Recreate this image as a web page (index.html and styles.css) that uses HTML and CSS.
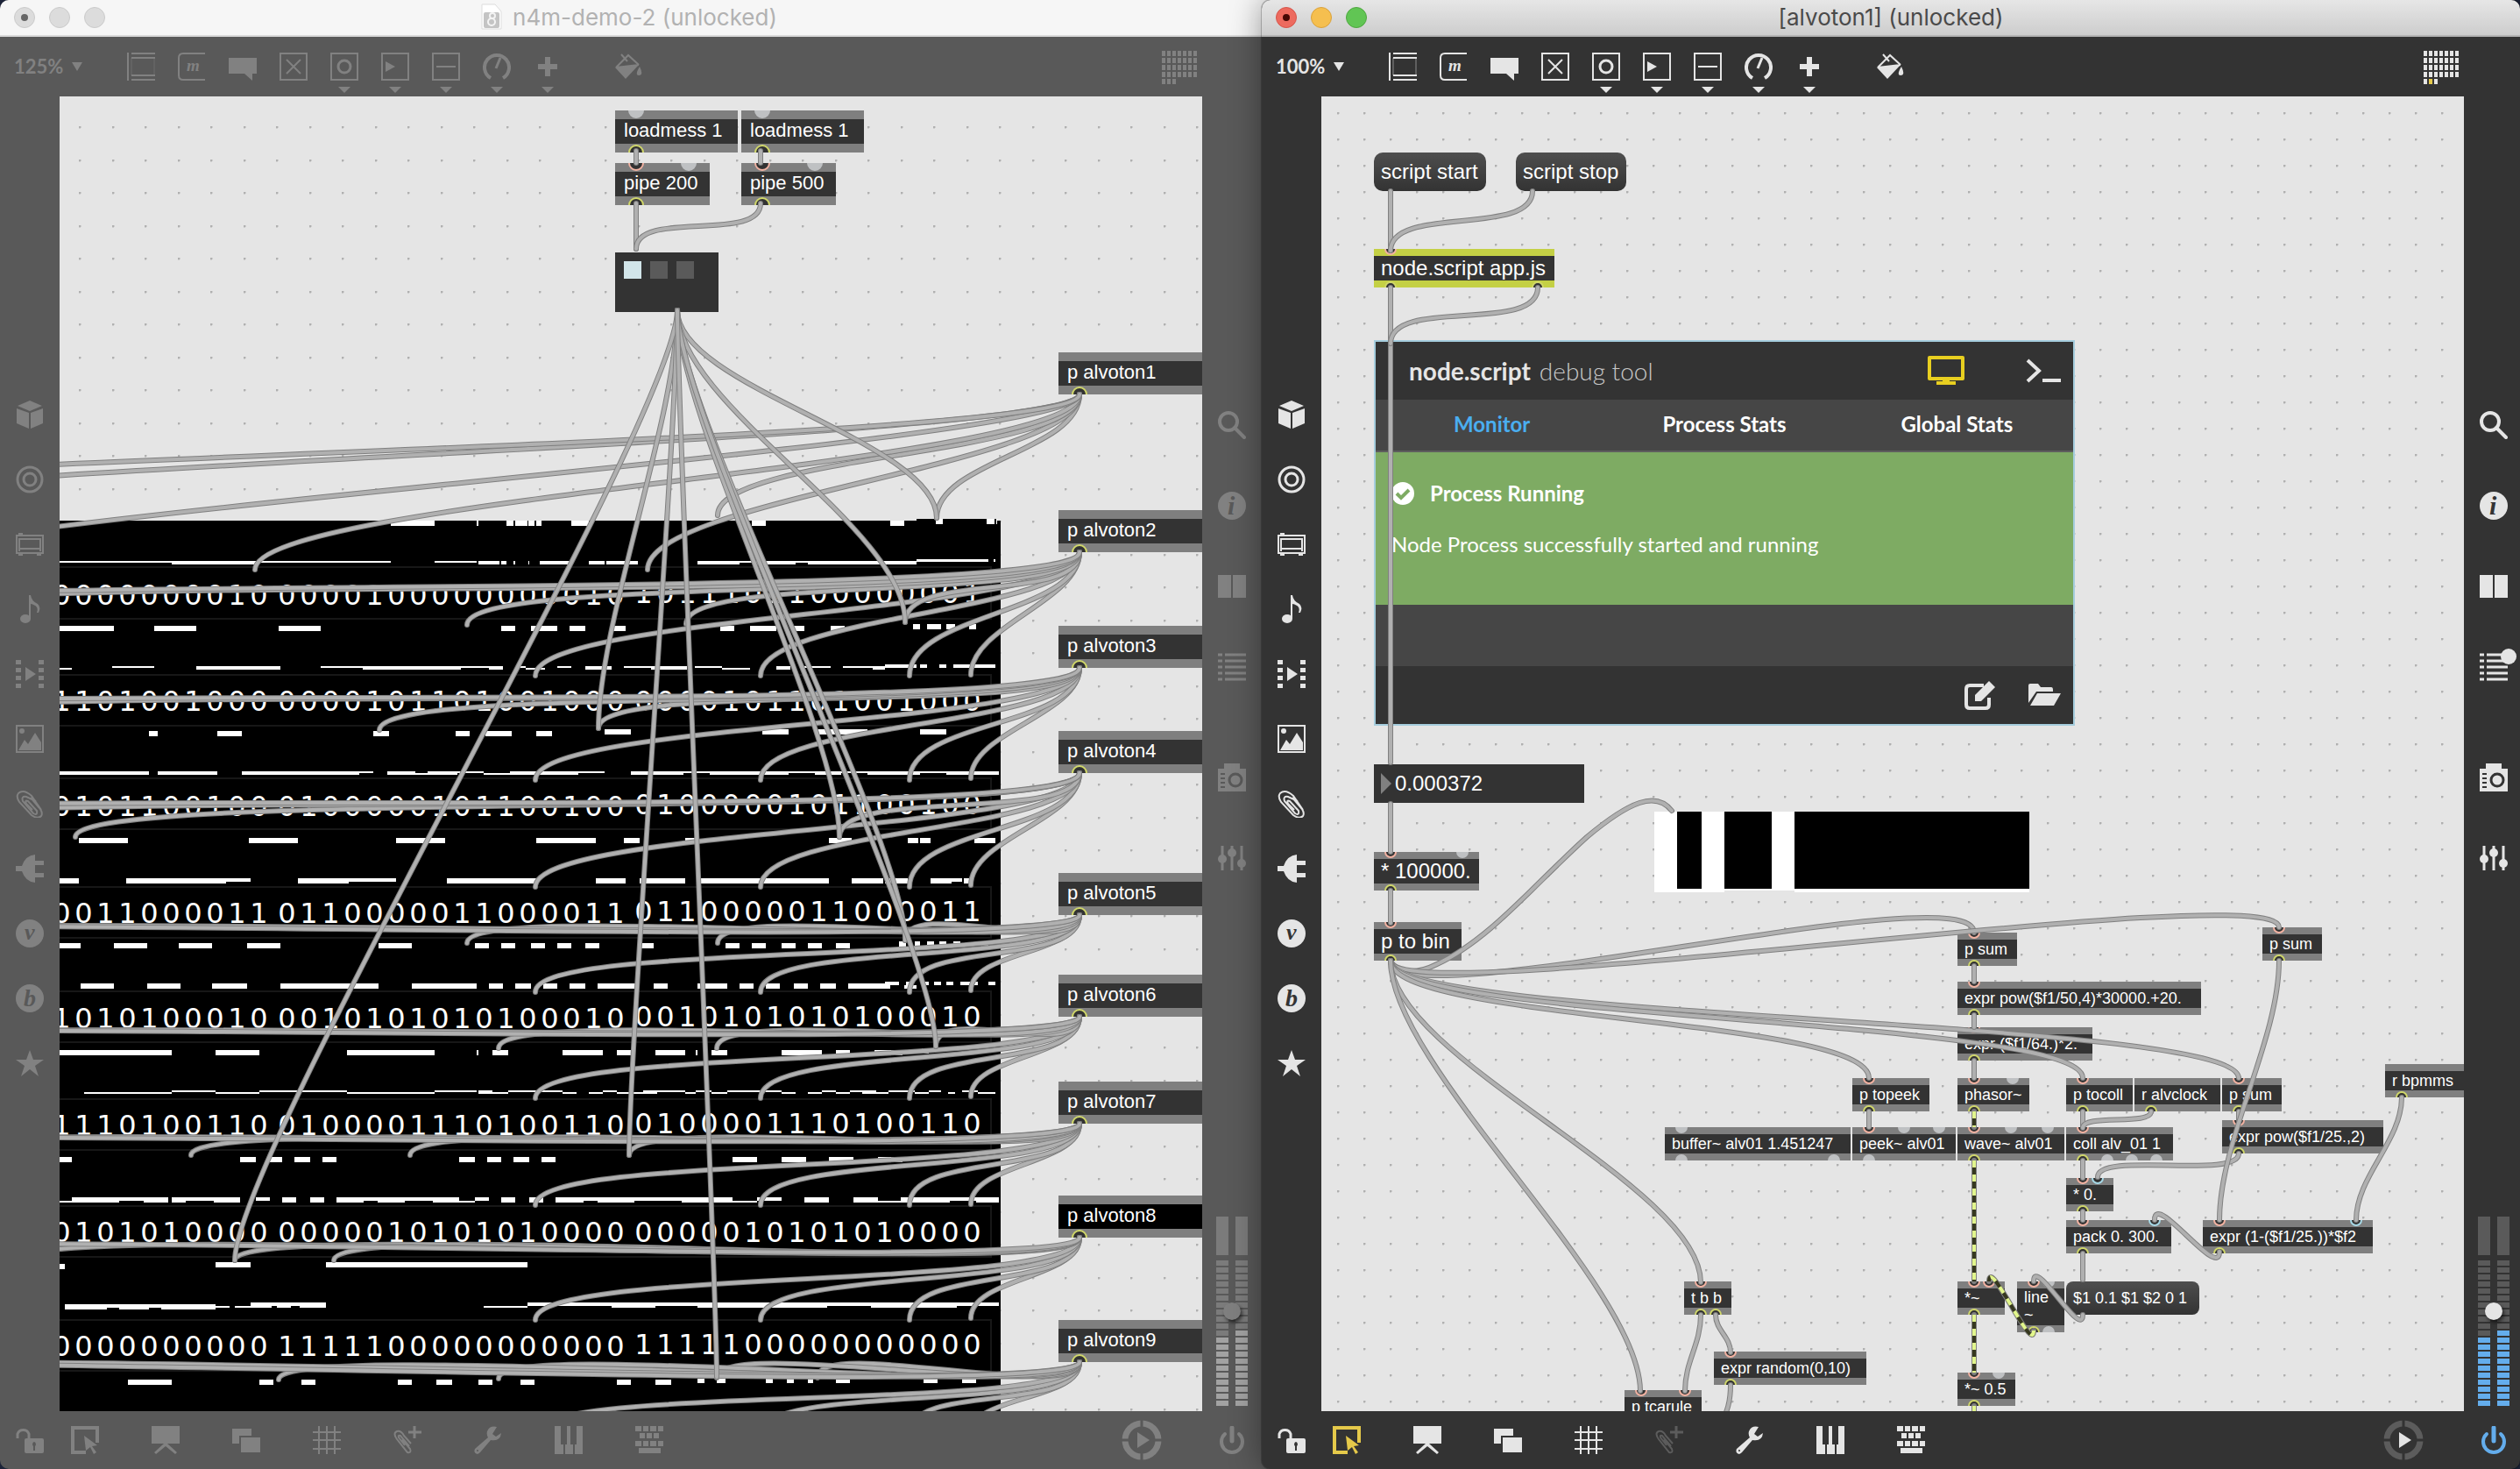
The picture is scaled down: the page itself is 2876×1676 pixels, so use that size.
FILE: index.html
```html
<!DOCTYPE html>
<html lang="en">
<head>
<meta charset="utf-8">
<title>alvoton1 (unlocked)</title>
<link rel="stylesheet" href="styles.css">
</head>
<body>
<svg class="symbols" aria-hidden="true">
  <symbol id="object" viewBox="0 0 32 32"><path d="M1 0V32M5 1H32M5 6H32M5 26H32M5 31H32" fill="none" stroke="currentColor" stroke-width="2"/><path d="M5 6V26M31 6V26" stroke="currentColor" opacity=".5"/></symbol>
  <symbol id="message" viewBox="0 0 32 32"><path d="M31 1H6Q1 1 1 6V26Q1 31 6 31H31" fill="none" stroke="currentColor" stroke-width="2"/><text x="10" y="21" class="glyph" font-size="19">m</text></symbol>
  <symbol id="comment" viewBox="0 0 32 32"><path d="M0 6H32V24H27V32L18 24H0Z" fill="currentColor"/></symbol>
  <symbol id="toggle" viewBox="0 0 32 32"><path d="M1 1H31V31H1ZM8 8L24 24M24 8L8 24" fill="none" stroke="currentColor" stroke-width="2"/></symbol>
  <symbol id="button" viewBox="0 0 32 32"><path d="M1 1H31V31H1Z" fill="none" stroke="currentColor" stroke-width="2"/><circle cx="16" cy="16" r="7" fill="none" stroke="currentColor" stroke-width="3"/></symbol>
  <symbol id="number" viewBox="0 0 32 32"><path d="M1 1H31V31H1Z" fill="none" stroke="currentColor" stroke-width="2"/><path d="M5 10L16 16L5 22Z" fill="currentColor"/></symbol>
  <symbol id="slider" viewBox="0 0 32 32"><path d="M1 1H31V31H1ZM5 16H27" fill="none" stroke="currentColor" stroke-width="2"/></symbol>
  <symbol id="dial" viewBox="0 0 32 32"><path d="M9 29A14 14 0 1 1 23 29" fill="none" stroke="currentColor" stroke-width="4"/><path d="M15 18L20 6" stroke="currentColor" stroke-width="3"/></symbol>
  <symbol id="plus" viewBox="0 0 32 32"><path d="M16 5V27M5 16H27" stroke="currentColor" stroke-width="6"/></symbol>
  <symbol id="bucket" viewBox="0 0 32 32"><path d="M2 17L16 3L28 14M8 2L15 10M2 17L28 14" fill="none" stroke="currentColor" stroke-width="2"/><path d="M1 17L28 14L13 30ZM29 16Q34 26 28 26Q23 26 29 16Z" fill="currentColor"/></symbol>
  <symbol id="cube" viewBox="0 0 32 32"><path d="M16 0L30 6L16 12L2 6ZM1 9L15 14V32L1 26ZM31 9L17 14V32L31 26Z" fill="currentColor"/></symbol>
  <symbol id="target" viewBox="0 0 32 32"><g fill="none" stroke="currentColor" stroke-width="3"><circle cx="16" cy="16" r="14"/><circle cx="16" cy="16" r="7"/></g></symbol>
  <symbol id="panel" viewBox="0 0 32 32"><path d="M1 6H31V26H1ZM4 10H29M4 21H29M4 9V24M28 9V24" fill="none" stroke="currentColor" stroke-width="2"/><path d="M3 3H8V6H3ZM3 26H8V29H3ZM24 26H29V29H24Z" fill="currentColor"/></symbol>
  <symbol id="note" viewBox="0 0 32 32"><ellipse cx="11" cy="27" rx="6" ry="5" fill="currentColor"/><path d="M15 27V0H17Q18 7 25 10Q29 14 26 20H24Q27 12 17 10V27Z" fill="currentColor"/></symbol>
  <symbol id="film" viewBox="0 0 32 32"><path d="M0 0H6V5H0ZM0 9H6V14H0ZM0 18H6V23H0ZM0 27H6V32H0ZM26 0H32V5H26ZM26 9H32V14H26ZM26 18H32V23H26ZM26 27H32V32H26ZM11 8L23 16L11 24Z" fill="currentColor"/></symbol>
  <symbol id="picture" viewBox="0 0 32 32"><path d="M1 1H31V31H1Z" fill="none" stroke="currentColor" stroke-width="2"/><circle cx="7" cy="7" r="3" fill="currentColor"/><path d="M3 29L10 17L14 22L22 9L29 20V29Z" fill="currentColor"/></symbol>
  <symbol id="clip" viewBox="0 0 32 32"><path d="M23 12L12 7Q6 6 8 12L20 26Q25 29 24 23L14 12Q10 10 12 15L19 22M12 7M29 22L18 6Q9 -2 3 3Q0 7 4 13L18 28Q25 33 29 29Q31 26 28 21L17 8" transform="translate(0 1)" fill="none" stroke="currentColor" stroke-width="2"/></symbol>
  <symbol id="plug" viewBox="0 0 32 32"><path d="M0 13H7Q11 1 22 0V7H32V12H22V21H32V26H22V32Q11 31 7 19H0Z" fill="currentColor"/></symbol>
  <symbol id="vizzie" viewBox="0 0 32 32"><circle cx="16" cy="16" r="16" fill="currentColor"/><text x="10" y="23" class="cutout" font-size="26">v</text></symbol>
  <symbol id="beap" viewBox="0 0 32 32"><circle cx="16" cy="16" r="16" fill="currentColor"/><text x="9" y="25" class="cutout" font-size="28">b</text></symbol>
  <symbol id="star" viewBox="0 0 32 32"><path d="M16 1L20 12H32L22 19L26 31L16 23L6 31L10 19L0 12H12Z" fill="currentColor"/></symbol>
  <symbol id="search" viewBox="0 0 32 32"><circle cx="12" cy="12" r="10" fill="none" stroke="currentColor" stroke-width="4"/><path d="M19 19L30 30" stroke="currentColor" stroke-width="4" stroke-linecap="round"/></symbol>
  <symbol id="info" viewBox="0 0 32 32"><circle cx="16" cy="16" r="16" fill="currentColor"/><text x="11" y="26" class="cutout" font-size="30">i</text></symbol>
  <symbol id="book" viewBox="0 0 32 32"><path d="M0 3H15V29H0ZM17 3H32V29H17Z" fill="currentColor"/></symbol>
  <symbol id="list" viewBox="0 0 32 32"><path d="M0 2H5M8 2H32M0 9H5M8 9H32M0 16H5M8 16H32M0 23H5M8 23H32M0 30H5M8 30H32" stroke="currentColor" stroke-width="3"/></symbol>
  <symbol id="camera" viewBox="0 0 32 32"><path d="M7 0H25V6H32V32H0V6H7Z" fill="currentColor"/><circle cx="20" cy="19" r="7" fill="none" stroke="var(--bar)" stroke-width="3"/><path d="M3 12H8M3 17H8M3 22H8M3 27H8" stroke="var(--bar)" stroke-width="2"/></symbol>
  <symbol id="sliders" viewBox="0 0 32 32"><path d="M5 2V30M16 2V30M27 2V30" stroke="currentColor" stroke-width="3"/><g fill="currentColor"><circle cx="5" cy="17" r="5"/><circle cx="16" cy="10" r="5"/><circle cx="27" cy="22" r="5"/></g></symbol>
  <symbol id="unlock" viewBox="0 0 32 32"><path d="M2 14V9A7 7 0 0 1 15 9V15" fill="none" stroke="currentColor" stroke-width="3"/><rect x="10" y="14" width="22" height="17" rx="2" fill="currentColor"/><path d="M21 18A3 3 0 0 1 22 23V28H20V23A3 3 0 0 1 21 18Z" fill="var(--bar)"/></symbol>
  <symbol id="select" viewBox="0 0 32 32"><path d="M0 0H32V19H28V4H4V28H17V32H0Z" fill="currentColor"/><path d="M15 11L30 22L24 23L29 30L26 32L22 24L17 28Z" fill="currentColor"/></symbol>
  <symbol id="present" viewBox="0 0 32 32"><path d="M0 0H32V20H0ZM14 20H18L29 30L27 32L16 23L5 32L3 30Z" fill="currentColor"/></symbol>
  <symbol id="layers" viewBox="0 0 32 32"><path d="M0 3H22V11H8V20H0ZM10 13H32V30H10Z" fill="currentColor"/></symbol>
  <symbol id="grid" viewBox="0 0 32 32"><path d="M7 0V32M16 0V32M25 0V32M0 7H32M0 16H32M0 26H32" stroke="currentColor" stroke-width="2"/></symbol>
  <symbol id="clipplus" viewBox="0 0 32 32"><path d="M13 22L6 13Q5 10 8 11L18 23M10 15L19 26Q21 31 16 30L4 15Q-1 8 4 6Q9 5 12 11L20 20" fill="none" stroke="currentColor" stroke-width="2"/><path d="M24 0V14M17 7H32" stroke="currentColor" stroke-width="3"/></symbol>
  <symbol id="wrench" viewBox="0 0 32 32"><path d="M26 1Q18 -1 15 6Q14 10 16 13L1 26Q-1 31 4 32Q6 31 7 30L19 16Q30 18 31 8L25 12L21 9Z" fill="currentColor"/><circle cx="4" cy="28" r="1" fill="var(--bar)"/></symbol>
  <symbol id="piano" viewBox="0 0 32 32"><path d="M0 0H7V21H10V32H0ZM12 21H14V0H18V21H21V32H12ZM25 0H32V32H23V21H25Z" fill="currentColor"/></symbol>
  <symbol id="keys" viewBox="0 0 32 32"><path d="M0 3H7M9 3H15M17 3H24M26 3H32M5 11H11M13 11H19M21 11H27M0 20H7M9 20H15M17 20H24M26 20H32M4 28H29" stroke="currentColor" stroke-width="6"/></symbol>
  <symbol id="run" viewBox="0 0 46 46"><circle cx="23" cy="23" r="19" fill="none" stroke="var(--ring)" stroke-width="7"/><path d="M23 0V10M23 36V46M0 23H10M36 23H46" stroke="var(--bar)" stroke-width="3"/><path d="M18 14L32 23L18 32Z" fill="currentColor"/></symbol>
  <symbol id="power" viewBox="0 0 32 32"><path d="M8 9A12 12 0 1 0 24 9" fill="none" stroke="currentColor" stroke-width="4" stroke-linecap="round"/><path d="M16 2V17" stroke="currentColor" stroke-width="5" stroke-linecap="round"/></symbol>
</svg>

<main class="desktop">
  <section class="window window--idle" data-patch="demo">
    <header class="titlebar">
      <span class="lights"><i class="light light--dot"></i><i class="light"></i><i class="light"></i></span>
      <h1 class="title"><svg class="doc" viewBox="0 0 24 30" aria-hidden="true"><path d="M1 1H16L23 9V29H1Z" fill="#fff" stroke="#ddd"/><rect x="3" y="10" width="18" height="18" rx="2" fill="#c4c4c4"/><circle cx="12" cy="21" r="4" fill="none" stroke="#f4f4f4" stroke-width="2"/><circle cx="13" cy="14" r="3" fill="none" stroke="#f4f4f4" stroke-width="2"/></svg>n4m-demo-2 (unlocked)</h1>
    </header>
    <nav class="toolbar" aria-label="Objects" data-zoom="125%"></nav>
    <div class="workspace">
      <nav class="side side--left" aria-label="Browsers"></nav>
      <div class="canvas canvas--zoomed"></div>
      <aside class="side side--right"></aside>
    </div>
    <footer class="bottombar"></footer>
  </section>

  <section class="window window--active" data-patch="alvoton">
    <header class="titlebar">
      <span class="lights"><i class="light light--dot light--red"></i><i class="light light--amber"></i><i class="light light--green"></i></span>
      <h1 class="title">[alvoton1] (unlocked)</h1>
    </header>
    <nav class="toolbar" aria-label="Objects" data-zoom="100%"></nav>
    <div class="workspace">
      <nav class="side side--left" aria-label="Browsers"></nav>
      <div class="canvas">
        <article class="debug">
          <header class="debug__head">
            <strong>node.script</strong><span class="debug__sub">debug tool</span>
            <svg class="debug__screen" viewBox="0 0 42 34" aria-hidden="true"><path d="M2 2H40V26H2Z" fill="none" stroke="#e8cf20" stroke-width="4" stroke-linejoin="round"/><path d="M10 31H32" stroke="#e8cf20" stroke-width="4"/><path d="M21 26V31" stroke="#e8cf20" stroke-width="8"/></svg>
            <svg class="debug__shell" viewBox="0 0 40 30" aria-hidden="true"><path d="M2 3L15 15L2 27M19 26H40" fill="none" stroke="#e5e5e5" stroke-width="4"/></svg>
          </header>
          <nav class="debug__tabs"><button class="tab tab--on">Monitor</button><button class="tab">Process Stats</button><button class="tab">Global Stats</button></nav>
          <div class="debug__status">
            <p class="debug__state"><svg class="debug__check" viewBox="0 0 26 26" aria-hidden="true"><circle cx="13" cy="13" r="13" fill="#fff"/><path d="M6 13L11 18L20 9" fill="none" stroke="#7eab63" stroke-width="4"/></svg>Process Running</p>
            <p class="debug__note">Node Process successfully started and running</p>
          </div>
          <footer class="debug__foot">
            <svg class="debug__action" viewBox="0 0 38 34" aria-hidden="true"><path d="M22 6H6Q2 6 2 10V28Q2 32 6 32H24Q28 32 28 28V20" fill="none" stroke="#e5e5e5" stroke-width="4"/><path d="M12 24V17L28 1L35 8L19 24Z" fill="#e5e5e5"/></svg>
            <svg class="debug__action" viewBox="0 0 38 34" aria-hidden="true"><path d="M1 26V6Q1 4 3 4H12L15 8H27Q29 8 29 11V13H10ZM3 29L11 15H38L30 29Z" fill="#e5e5e5"/></svg>
          </footer>
        </article>
      </div>
      <aside class="side side--right"></aside>
    </div>
    <footer class="bottombar"></footer>
  </section>
</main>
<script src="patch.js"></script>
</body>
</html>
```

FILE: styles.css
```css
* { box-sizing: border-box; }
body { margin: 0; background: #1c2338; font-family: "Liberation Sans", Arial, sans-serif; }
button, input, select { font: inherit; color: inherit; border: 0; margin: 0; padding: 0; background: none; border-radius: 0; }
h1, p { margin: 0; }
svg { display: block; }
.symbols { display: none; }
.glyph, .cutout { font-family: "Liberation Serif", serif; font-style: italic; font-weight: bold; fill: currentColor; }
.cutout { fill: var(--bar); }

.desktop { display: grid; grid-template-columns: 1fr 1fr; height: 100vh; overflow: hidden; }
.window { position: relative; display: flex; flex-direction: column; min-width: 0; min-height: 0; border-radius: 10px; overflow: hidden; background: var(--bar); color: var(--ink); }
/* The idle window slides under the edge of the active one. */
.window--idle { --bar: #595959; --ink: #818181; --ring: #818181; --well: #7b7b7b; --lit: #a2a2a2; --knob: #7f7f7f; --accent: #818181; --power: #818181; --dim: #818181; margin-right: -12px; padding-right: 14px; border-radius: 10px 0 0 10px; }
.window--idle .titlebar { margin-right: -14px; }
.window--active { --bar: #333; --ink: #e5e5e5; --ring: #5c5c5c; --well: #5a5a5a; --lit: #64adec; --knob: #e5e5e5; --accent: #e5c94a; --power: #64adec; --dim: #5c5c5c; margin-left: 2px; box-shadow: 0 0 0 1px rgba(0, 0, 0, .2), 0 0 36px rgba(0, 0, 0, .4); }

.titlebar { display: grid; grid-template-columns: 130px 1fr 130px; align-items: center; height: 42px; flex: none; border-bottom: 2px solid #dadada; background: #f6f6f6; color: #b2b2b2; }
.window--idle .titlebar { padding-right: 14px; }
.window--active .titlebar { background: linear-gradient(#e6e6e6, #cdcdcd); border-color: #b4b4b4; color: #4a4a4a; }
.lights { display: flex; gap: 16px; padding-left: 16px; }
.light { display: grid; place-items: center; width: 24px; height: 24px; border: 1px solid #cacaca; border-radius: 50%; background: #dcdcdc; }
.light--red { background: #ed6a5e; border-color: #d5544a; color: #460804; }
.light--amber { background: #f5bf4f; border-color: #d9a13c; }
.light--green { background: #61c554; border-color: #4ea73f; }
.light--dot::after { content: ""; width: 8px; height: 8px; border-radius: 50%; background: #666; }
.light--red::after { background: #460804; }
.title { display: flex; justify-content: center; gap: 12px; font: 400 26px/32px Inter, sans-serif; white-space: nowrap; }
.doc { width: 24px; height: 30px; }

.toolbar { display: flex; align-items: stretch; height: 68px; flex: none; }
.zoom { position: relative; display: flex; align-items: center; width: 132px; padding-left: 16px; }
.zoom select { appearance: none; width: 80px; font: 700 22px/28px Lato, sans-serif; }
.zoom svg { position: absolute; left: 82px; top: 29px; width: 12px; height: 10px; pointer-events: none; }
.tool { position: relative; display: grid; place-items: center; width: 58px; }
.tool--fill { margin-left: 34px; }
.icon { width: 32px; height: 32px; }
.caret { position: absolute; left: 22px; bottom: 4px; width: 14px; height: 7px; }
.cells { display: grid; grid-template-columns: repeat(7, 4px); grid-auto-rows: 6px; gap: 2px; align-self: center; margin: 2px 70px 0 auto; }
.cell { background: currentColor; }
.window--active .cell--on { background: #e5c94a; }

.workspace { display: flex; flex: 1; min-height: 0; }
.side { display: flex; flex-direction: column; flex: none; }
.side--left { width: 68px; padding-top: 326px; }
.side--left .tool { width: 68px; height: 74px; }
.side--right { width: 64px; padding: 329px 0 6px 4px; }
.side--right .tool { width: 60px; height: 92px; }
.side--right .tool--gap { margin-top: 34px; }
.badge { position: absolute; right: 4px; top: 25px; width: 18px; height: 18px; border-radius: 50%; background: #e5e5e5; }
.window--idle .badge { display: none; }
.meter { position: relative; display: flex; gap: 8px; margin: auto 0 0 12px; width: 36px; height: 216px; }
.meter__bar { position: relative; width: 14px; background: linear-gradient(var(--well), var(--well)) top / 14px 44px no-repeat, repeating-linear-gradient(to top, var(--well) 0 6px, transparent 6px 8px) bottom / 14px 168px no-repeat; }
.meter__lit { position: absolute; inset: auto 0 0; background: repeating-linear-gradient(to top, var(--lit) 0 6px, var(--bar) 6px 8px); }
.meter input { position: absolute; inset: 0; width: 36px; height: 216px; appearance: none; writing-mode: vertical-lr; direction: rtl; }
.meter input::-webkit-slider-thumb { appearance: none; width: 20px; height: 20px; border-radius: 50%; background: var(--knob); box-shadow: 2px 3px 4px rgba(0, 0, 0, .6); }

.bottombar { display: flex; align-items: stretch; height: 66px; flex: none; }
.bottombar .tool { width: 92px; }
.bottombar .tool--unlock { width: 34px; margin-left: 17px; }
.bottombar .tool--select { color: var(--accent); }
.bottombar .tool--clipplus { color: var(--dim); }
.bottombar .tool--run { margin-left: auto; }
.bottombar .tool--run .icon { width: 46px; height: 46px; }
.bottombar .tool--power { width: 60px; margin-left: 27px; color: var(--power); }

/* Patcher canvas: objects sit freely on a dotted grid. */
.canvas { position: relative; flex: 1; min-width: 0; overflow: hidden; background: #e5e5e5 radial-gradient(circle at 1px 1px, #b0b0b0 1px, transparent 2px) 18px 18px / 30px 30px; }
.canvas--zoomed {
  --dot: radial-gradient(circle at 1px 1px, #b0b0b0 1px, transparent 2px);
  background: var(--dot) 22px 34px / 75px 75px, var(--dot) 60px 34px / 75px 75px, var(--dot) 22px 72px / 75px 75px, var(--dot) 60px 72px / 75px 75px, #e5e5e5;
}
.layer { position: absolute; left: 0; top: 0; pointer-events: none; }
.box { position: absolute; padding: 0 8px; border: solid #7f7f7f; border-width: 8px 0; background: #333; color: #fff; font-size: 18px; line-height: 22px; white-space: nowrap; text-align: left; overflow: hidden; }
.box--large { font-size: 24px; line-height: 28px; }
.box--zoomed { font-size: 22px; line-height: 26px; border-width: 10px 0; padding: 0 10px; }
.box--wrap { white-space: normal; line-height: 20px; }
.box--node { border-color: #c4d045; }
.box--held { background: #000; }
.box--message { border: 0; border-radius: 8px; background: linear-gradient(#4e4e4e, #333); }
.box--message.box--large { border-radius: 10px; }
.box--number { border: 0; padding: 0 0 0 24px; }
.preset { position: absolute; display: flex; gap: 10px; padding: 10px; background: #333; }
.preset i { width: 20px; height: 20px; background: #5a5a5a; }
.preset i:first-child { background: #d2e5e9; }
.digits { position: absolute; display: grid; grid-auto-flow: column; grid-auto-columns: 25px; color: #fff; font: 32px/40px "DejaVu Sans", sans-serif; text-align: center; }
.cord { fill: none; stroke-linecap: round; }
.cord--edge { stroke: #808080; stroke-width: 6px; }
.cord--core { stroke: #b0b0b0; stroke-width: 4px; }
.cord--dark { stroke: #36381f; stroke-width: 4px; stroke-linecap: butt; }
.cord--signal { stroke: #e2f68d; stroke-width: 4px; stroke-linecap: butt; stroke-dasharray: 8 8; }

.debug { position: absolute; left: 60px; top: 278px; width: 800px; height: 440px; display: flex; flex-direction: column; border: 2px solid #a5cddd; background: #464646; color: #fff; font: 24px/32px Lato, sans-serif; }
.debug__head { display: flex; align-items: center; height: 66px; padding: 0 14px 0 38px; background: #333; font-size: 28px; color: #e5e5e5; }
.debug__sub { margin-left: 10px; font-weight: 300; color: #c8c8c8; }
.debug__screen { width: 42px; height: 34px; margin-left: auto; }
.debug__shell { width: 40px; height: 30px; margin-left: 70px; }
.debug__tabs { display: grid; grid-template-columns: repeat(3, 1fr); height: 60px; padding-bottom: 2px; border-bottom: 2px solid #5e5e5e; }
.tab { font-weight: 700; }
.tab--on { color: #4aaef0; }
.debug__status { height: 174px; padding: 31px 18px; background: #7eab63; }
.debug__state { display: flex; align-items: center; gap: 18px; font-weight: 700; }
.debug__check { width: 26px; height: 26px; }
.debug__note { margin-top: 26px; }
.debug__foot { display: flex; justify-content: flex-end; align-items: center; gap: 34px; height: 66px; margin-top: auto; padding-right: 14px; background: #333; }
.debug__action { width: 38px; height: 34px; }
```

FILE: patch.js
```js
const icon = (id) => `<svg class="icon" aria-hidden="true"><use href="#${id}"/></svg>`;
const caret = '<svg class="caret" viewBox="0 0 14 7"><path d="M0 0H14L7 7Z" fill="currentColor"/></svg>';
const tool = (id, cls = '', extra = '') => `<button class="tool ${cls}" aria-label="${id}">${icon(id)}${extra}</button>`;

/* Window chrome */
document.querySelectorAll('.window').forEach((win) => {
  const bar = win.querySelector('.toolbar');
  const zoom = bar.dataset.zoom;
  const dropdowns = ['button', 'number', 'slider', 'dial', 'plus'];
  bar.innerHTML =
    `<label class="zoom"><select aria-label="Zoom"><option>${zoom}</option></select><svg viewBox="0 0 12 10"><path d="M0 0H12L6 10Z" fill="currentColor"/></svg></label>` +
    ['object', 'message', 'comment', 'toggle', ...dropdowns].map((id) => tool(id, '', dropdowns.includes(id) ? caret : '')).join('') +
    tool('bucket', 'tool--fill') +
    `<span class="cells">${Array.from({ length: 31 }, (_, i) => `<i class="cell${i === 29 ? ' cell--on' : ''}"></i>`).join('')}</span>`;
  win.querySelector('.side--left').innerHTML =
    ['cube', 'target', 'panel', 'note', 'film', 'picture', 'clip', 'plug', 'vizzie', 'beap', 'star'].map((id) => tool(id)).join('');
  win.querySelector('.side--right').innerHTML =
    tool('search') + tool('info') + tool('book') + tool('list', '', '<span class="badge"></span>') + tool('camera', 'tool--gap') + tool('sliders') +
    '<div class="meter"><div class="meter__bar"><div class="meter__lit" style="height:80px"></div></div><div class="meter__bar"><div class="meter__lit" style="height:88px"></div></div><input type="range" aria-label="Gain" value="50"></div>';
  win.querySelector('.bottombar').innerHTML =
    ['unlock', 'select', 'present', 'layers', 'grid', 'clipplus', 'wrench', 'piano', 'keys', 'run', 'power'].map((id) => tool(id, 'tool--' + id)).join('');
});

/* Patches. box: [x, y, w, h, text, classes, inlets, outlets]; a port is "<x offset><kind>"
   with kind h = hot, b = cold with a cord, c = free. cord: [x1, y1, x2, y2, bend]. */
const demo = {
  origin: [68, 110], port: 8, style: 'box--zoomed',
  boxes: [
    [702, 126, 140, 48, 'loadmess 1', '', '24c', '24o'],
    [846, 126, 140, 48, 'loadmess 1', '', '24c', '24o'],
    [702, 186, 108, 48, 'pipe 200', '', '24h 84c', '24o'],
    [846, 186, 108, 48, 'pipe 500', '', '24h 84c', '24o'],
    ...[402, 582, 714, 834, 996, 1112, 1234, 1364, 1506].map((y, i) => [1208, y, 200, 48, 'p alvoton' + (i + 1), i === 7 ? 'box--held' : '', '', '24o']),
  ],
  cords: [
    [726, 172, 726, 186], [868, 172, 868, 186], [726, 232, 726, 284], [868, 232, 726, 284],
  ],
  signals: [],
  paths: [],
};
const fans = {
  450: [[1069, 591], [739, 650], [819, 588], [291, 650], [-160, 650, 60], [-350, 592, 56], [-590, 588, 63]],
  630: [[1108, 770], [1038, 771], [868, 771], [611, 771], [1033, 710], [783, 712], [533, 713], [-220, 713, 74], [-470, 711, 66]],
  762: [[1108, 888], [1038, 890], [868, 890], [611, 890], [683, 831], [433, 833], [-220, 832, 66], [-470, 830, 66]],
  882: [[1108, 1010], [1038, 1012], [868, 1012], [611, 1012], [958, 955], [86, 955], [-220, 953, 66], [-470, 950, 68]],
  1044: [[1108, 1130], [1038, 1132], [868, 1132], [611, 1132], [1033, 1073], [819, 1076], [533, 1076], [-220, 1074, 46], [-470, 1076, 50]],
  1160: [[1108, 1251], [1038, 1253], [868, 1253], [611, 1253], [1068, 1194], [818, 1196], [569, 1196], [-220, 1194, 46], [-470, 1196, 50]],
  1282: [[1108, 1374], [1038, 1375], [868, 1375], [611, 1375], [718, 1318], [468, 1318], [218, 1318], [-220, 1316, 46], [-470, 1318, 50]],
  1412: [[1108, 1504], [1038, 1506], [868, 1506], [611, 1506], [381, 1438], [268, 1438], [20, 1438], [-220, 1436, 46]],
  1554: [[1108, 1636], [1038, 1636], [868, 1636], [611, 1636], [933, 1572], [818, 1572], [569, 1573], [318, 1574], [-220, 1570, 46], [-470, 1572, 50]],
};
for (const [y, ends] of Object.entries(fans)) ends.forEach(([x2, y2, bend]) => demo.cords.push([1232, +y, x2, y2, bend]));
[[1069, 591], [1033, 710], [683, 831], [958, 955], [1033, 1073], [1068, 1194], [718, 1318], [268, 1438], [818, 1571]]
  .forEach(([x, y]) => demo.cords.push([773, 354, x, y]));

/* Cellular-automaton read-outs: y of each digit row, then its three words. */
const rows = [
  [676, -2, '0000000010', '0000100000000010', '1011101100000001'],
  [797, 0, '1101001000', '0000101101001000', '0000101101001000'],
  [917, -2, '0101100100', '0100000101100100', '0100000101100100'],
  [1039, -2, '0011000011', '0110000011000011', '0110000011000011'],
  [1159, -2, '1010100010', '0010101010100010', '0010101010100010'],
  [1281, -2, '1110100110', '0100001110100110', '0100001110100110'],
  [1403, 0, '0101010000', '0000010101010000', '0000010101010000'],
  [1533, -2, '0000000000', '1111100000000000', '1111100000000000'],
];
const frames = [[647, 706], [770, 828], [888, 946], [1012, 1070], [1131, 1189], [1254, 1312], [1376, 1434], [1506, 1564]];
/* Slider traces: [y, height, x1, x2, x1, x2, ...] */
const traces = [
  [594, 6, 446, 496, 544, 546, 578, 586, 588, 602, 603, 610, 612, 618, 652, 672, 858, 874, 1016, 1032],
  [592, 6, 1068, 1076, 1126, 1135, 1137, 1138],
  [640, 2, 68, 446, 496, 544, 844, 860, 908, 922],
  [640, 4, 196, 294, 546, 570, 572, 578, 586, 588, 603, 604, 616, 650, 672, 690, 692, 728, 796, 844, 860, 908, 922, 1046],
  [638, 3, 1046, 1128, 1134, 1136],
  [714, 6, 68, 130, 176, 224, 318, 366, 572, 588, 606, 636, 650, 668, 698, 714, 822, 838, 856, 886, 903, 918, 948, 964],
  [712, 6, 1042, 1050, 1058, 1074, 1080, 1090, 1106, 1114],
  [760, 2, 128, 176, 366, 414, 526, 558, 588, 600, 636, 652, 712, 743, 793, 824, 916, 948, 962, 996],
  [762, 2, 68, 82, 600, 622, 824, 856],
  [760, 4, 224, 320, 414, 526, 558, 574, 668, 698, 743, 784, 886, 902, 996, 1010],
  [758, 4, 1010, 1046, 1050, 1058, 1072, 1080, 1088, 1136],
  [834, 6, 170, 180, 248, 276, 426, 444, 520, 536, 554, 584, 612, 630],
  [832, 6, 690, 720, 870, 900, 930, 990, 1050, 1080],
  [880, 2, 410, 426, 522, 552, 582, 690, 780, 810, 900, 930, 960, 990, 1050, 1080],
  [880, 4, 68, 170, 180, 248, 276, 410, 442, 474, 488, 522, 582, 612, 630, 660, 720, 780, 810, 900, 930, 960, 990, 1050, 1080, 1140],
  [882, 2, 474, 488, 552, 582, 612, 630],
  [956, 6, 90, 146, 284, 340, 452, 508, 612, 680, 712, 730, 782, 794, 946, 972, 1036, 1048, 1050, 1062, 1112, 1136],
  [1002, 6, 68, 90, 144, 258, 340, 398, 510, 612, 680, 714, 730, 782, 800, 946, 972, 1008, 1010, 1036, 1062, 1086, 1100, 1106],
  [1002, 4, 258, 286, 398, 452, 1086, 1098],
  [1076, 6, 68, 92, 130, 168, 204, 242, 282, 320, 432, 470, 542, 558, 572, 588, 606, 622, 636, 652, 668, 684, 731, 746, 828, 844, 858, 874, 892, 908, 922, 938, 954, 970],
  [1074, 6, 1026, 1034, 1044, 1050, 1058, 1066, 1072, 1080, 1088, 1096, 1120, 1128],
  [1122, 6, 92, 130, 168, 206, 242, 282, 320, 432, 470, 544, 558, 574, 588, 606, 620, 636, 650, 668, 682, 728, 746, 762, 796, 830, 844, 860, 874, 890, 906, 922, 936, 954, 968, 1016],
  [1120, 4, 1010, 1026, 1034, 1040, 1054, 1060, 1066, 1074, 1080, 1088, 1096, 1116, 1128, 1136],
  [1124, 4, 1032, 1046],
  [1198, 6, 68, 196, 246, 296, 396, 496, 544, 546, 562, 580, 642, 688, 704, 720, 748, 782, 794, 796, 812, 830, 892, 938, 954, 970, 998, 1030],
  [1196, 6, 1052, 1060],
  [1244, 2, 196, 246, 296, 396, 496, 544, 546, 562, 580, 642, 688, 704, 734, 782, 794, 812, 830, 892, 938, 954, 970, 1000, 1014, 1044, 1060, 1074, 1098, 1116],
  [1246, 2, 96, 196, 246, 296, 396, 496, 546, 580, 642, 658, 672, 688, 704, 750, 782, 794, 812, 830, 892, 908, 922, 938, 954, 970, 984, 1014, 1044, 1060, 1082, 1090, 1116, 1136],
  [1320, 6, 68, 82, 274, 292, 306, 322, 336, 354, 368, 384, 524, 542, 556, 572, 586, 604, 618, 634, 836, 864, 892, 920, 946, 974, 1002, 1030],
  [1366, 4, 136, 164, 212, 244, 292, 308, 415, 431, 462, 494, 542, 558, 666, 682, 724, 778, 864, 892, 1084, 1114],
  [1366, 6, 82, 136, 164, 192, 196, 212, 244, 274, 322, 338, 354, 370, 384, 415, 431, 462, 494, 524, 572, 588, 604, 620, 634, 666, 682, 724, 778, 836, 918, 946, 974, 1002, 1028, 1084, 1114, 1140],
  [1370, 2, 68, 82, 524, 542, 836, 864, 1002, 1028],
  [1440, 6, 246, 286, 372, 602], [1442, 6, 68, 74],
  [1488, 6, 74, 122, 136, 170, 184, 246], [1488, 4, 122, 136, 170, 184],
  [1490, 2, 246, 262, 268, 286, 552, 602],
  [1486, 6, 286, 310, 316, 332, 342, 372, 698, 748, 796, 944, 994, 1092],
  [1486, 4, 310, 316, 332, 342, 602, 698, 748, 796, 944, 994, 1092, 1140],
  [1574, 6, 146, 196, 296, 312, 344, 360, 454, 470, 498, 516, 546, 562, 594, 610, 704, 720, 748, 766],
  [1573, 5, 796, 804, 818, 828, 874, 882, 898, 906, 922, 928, 954, 970, 1054, 1070, 1098, 1114],
];

const alvoton = {
  origin: [1508, 110], port: 6, style: '',
  boxes: [
    [1568, 174, 128, 44, 'script start', 'box--large box--message', '', ''],
    [1730, 174, 126, 44, 'script stop', 'box--large box--message', '', ''],
    [1568, 284, 206, 44, 'node.script app.js', 'box--large box--node', '19h', '19o 187o'],
    [1568, 872, 240, 44, '0.000372', 'box--large box--number', '', ''],
    [1568, 972, 120, 44, '* 100000.', 'box--large', '19h 101c', '19o'],
    [1568, 1052, 100, 44, 'p to bin', 'box--large', '19h', '19o'],
    [2234, 1064, 68, 38, 'p sum', '', '19h', '19o'],
    [2582, 1058, 68, 38, 'p sum', '', '19h', '19o'],
    [2234, 1120, 278, 38, 'expr pow($f1/50,4)*30000.+20.', '', '19h', '19o'],
    [2234, 1172, 154, 38, 'expr ($f1/64.)*2.', '', '19h', '19o'],
    [2114, 1230, 88, 38, 'p topeek', '', '19h', '19o'],
    [2234, 1230, 82, 38, 'phasor~', '', '19h 63c', '19o'],
    [2358, 1230, 76, 38, 'p tocoll', '', '19h', '19o'],
    [2436, 1230, 98, 38, 'r alvclock', '', '', '19o'],
    [2536, 1230, 68, 38, 'p sum', '', '19h', '19o'],
    [2722, 1214, 120, 38, 'r bpmms', '', '', '19o'],
    [1900, 1286, 212, 38, 'buffer~ alv01 1.451247', '', '19c', '19c 193c'],
    [2114, 1286, 118, 38, 'peek~ alv01', '', '19h 59c 99c', '19c'],
    [2234, 1286, 122, 38, 'wave~ alv01', '', '19h 61c 103c', '19o'],
    [2358, 1286, 122, 38, 'coll alv_01 1', '', '19h', '19o 47c 75c 103c'],
    [2536, 1278, 184, 38, 'expr pow($f1/25.,2)', '', '19h', '19o'],
    [2358, 1344, 54, 38, '* 0.', '', '19h 36b', '19o'],
    [2358, 1392, 120, 38, 'pack 0. 300.', '', '19h 101b', '19o'],
    [2514, 1392, 194, 38, 'expr (1-($f1/25.))*$f2', '', '19h 175b', '19o'],
    [2234, 1462, 54, 38, '*~', '', '19h 36h', '19o'],
    [2302, 1462, 54, 58, 'line ~', 'box--wrap', '19h 36c', '19o 36c'],
    [2358, 1462, 152, 38, '$1 0.1 $1 $2 0 1', 'box--message', '', ''],
    [2234, 1566, 66, 38, '*~ 0.5', '', '19h 47c', '19o'],
    [1922, 1462, 54, 38, 't b b', '', '19h', '19o 36o'],
    [1956, 1542, 174, 38, 'expr random(0,10)', '', '19h', '19o'],
    [1854, 1586, 88, 38, 'p tcarule', '', '19h 69h', ''],
  ],
  cords: [
    [1587, 218, 1587, 286], [1749, 218, 1587, 286], [1587, 328, 1587, 870], [1755, 328, 1587, 392],
    [1587, 917, 1587, 972], [1587, 1016, 1587, 1053],
    [1587, 1096, 2253, 1064, 70], [1587, 1096, 2601, 1058, 60], [1587, 1096, 2555, 1230], [1587, 1096, 2377, 1230],
    [1587, 1096, 2133, 1230], [1587, 1096, 1941, 1463], [1587, 1096, 1872, 1587],
    [2253, 1102, 2253, 1120], [2253, 1158, 2253, 1172], [2253, 1210, 2253, 1230], [2133, 1268, 2133, 1286],
    [2377, 1268, 2377, 1286], [2455, 1268, 2377, 1287, 17], [2555, 1268, 2555, 1278], [2555, 1316, 2394, 1343, 30],
    [2377, 1324, 2377, 1344], [2377, 1382, 2377, 1392], [2377, 1430, 2377, 1460], [2601, 1096, 2533, 1392], [2741, 1252, 2689, 1392, 50],
    [2533, 1428, 2459, 1392, 34], [2377, 1500, 2321, 1462, 30],
    [1941, 1500, 1923, 1587, 34], [1958, 1500, 1975, 1543, 18], [1975, 1580, 1958, 1660, 40],
  ],
  signals: [[2253, 1268, 2253, 1286], [2253, 1324, 2253, 1462], [2253, 1500, 2253, 1566], [2253, 1604, 2253, 1620], [2321, 1518, 2270, 1462, 30]],
  paths: ['M1587 1096C1592 1108 1612 1114 1640 1100C1700 1072 1750 1010 1811 955C1860 914 1890 902 1908 925'],
};

const curve = ([x1, y1, x2, y2, bend]) => {
  const reach = bend ?? Math.min(45 + 0.18 * Math.abs(y2 - y1), 0.3 * Math.hypot(x2 - x1, y2 - y1), 120);
  return x1 === x2 ? `M${x1} ${y1}V${y2}` : `M${x1} ${y1}C${x1} ${y1 + reach} ${x2} ${y2 - reach} ${x2} ${y2}`;
};
const wire = (d) => `<path class="cord cord--edge" d="${d}"/><path class="cord cord--core" d="${d}"/>`;
const signal = (d) => `<path class="cord cord--edge" d="${d}"/><path class="cord cord--dark" d="${d}"/><path class="cord cord--signal" d="${d}"/>`;
const ring = { h: '#f2b2a2', b: '#a6d8e6', o: '#d0d76a' };
const ports = (list, x, y, r, sweep) => list.split(' ').filter(Boolean).map((p) => {
  const kind = p.slice(-1);
  const cx = x + parseInt(p, 10);
  const arc = `M${cx - r} ${y}A${r} ${r} 0 0 ${sweep} ${cx + r} ${y}`;
  return `<path d="${arc}" fill="${kind === 'c' ? '#bfc1c3' : '#333'}" stroke="${ring[kind] || '#bfc1c3'}" stroke-width="2"/>`;
}).join('');
const layer = ([ox, oy], body) => `<svg class="layer" width="1304" height="1500" viewBox="${ox} ${oy} 1304 1500">${body}</svg>`;
const spans = (flat, y, h) => {
  let out = '';
  for (let i = 0; i < flat.length; i += 2) out += `<rect x="${flat[i]}" y="${y}" width="${flat[i + 1] - flat[i]}" height="${h}"/>`;
  return out;
};

function draw(name, patch, backdrop) {
  const canvas = document.querySelector(`[data-patch="${name}"] .canvas`);
  const [ox, oy] = patch.origin;
  const boxes = patch.boxes.map(([x, y, w, h, text, cls]) => {
    const place = `style="left:${x - ox}px;top:${y - oy}px;width:${w}px;height:${h}px"`;
    const names = `class="box ${patch.style} ${cls}"`;
    if (cls.includes('message')) return `<button ${names} ${place}>${text}</button>`;
    if (cls.includes('number')) return `<input ${names} ${place} aria-label="Value" value="${text}">`;
    return `<div ${names} ${place}>${text}</div>`;
  }).join('');
  const sockets = patch.boxes.map(([x, y, , h, , , ins, outs]) => ports(ins, x, y, patch.port, 0) + ports(outs, x, y + h, patch.port, 1)).join('');
  const cords = patch.signals.map(curve).map(signal).join('') + [...patch.paths, ...patch.cords.map(curve)].map(wire).join('');
  canvas.insertAdjacentHTML('beforeend', backdrop + boxes + layer(patch.origin, sockets + cords));
}

const words = rows.map(([y, shift, a, b, c]) => [[58, a, 0], [315, b, 0], [722, c, shift]].map(([x, bits, dy]) =>
  `<div class="digits" style="left:${x - 68}px;top:${y + dy - 127}px">${[...bits].map((d) => `<span>${d}</span>`).join('')}</div>`).join('')).join('');
const readouts = layer(demo.origin,
  '<path d="M68 594H1046V592H1138V594H1142V1610H68Z"/>' +
  frames.map(([a, b]) => `<path d="M60 ${a}H1131V${b}H60" fill="none" stroke="#171717" stroke-width="2"/>`).join('') +
  `<g fill="#fff">${traces.map(([y, h, ...x]) => spans(x, y, h)).join('')}</g>`);
draw('demo', demo, readouts + words + '<div class="preset" style="left:634px;top:178px;width:118px;height:68px"><i></i><i></i><i></i></div>');

const barcode = layer(alvoton.origin,
  '<path d="M1888 926H2316V1018H2048V1016H1968V1018H1888Z" fill="#fff"/><path d="M1914 926H1942V1014H1914ZM1968 926H2022V1014H1968ZM2048 926H2316V1014H2048Z"/>');
draw('alvoton', alvoton, barcode);
const flag = layer(alvoton.origin, '<path d="M1576 882V906L1588 894Z" fill="#808080"/>');
document.querySelector('[data-patch="alvoton"] .canvas').insertAdjacentHTML('beforeend', flag);
```
